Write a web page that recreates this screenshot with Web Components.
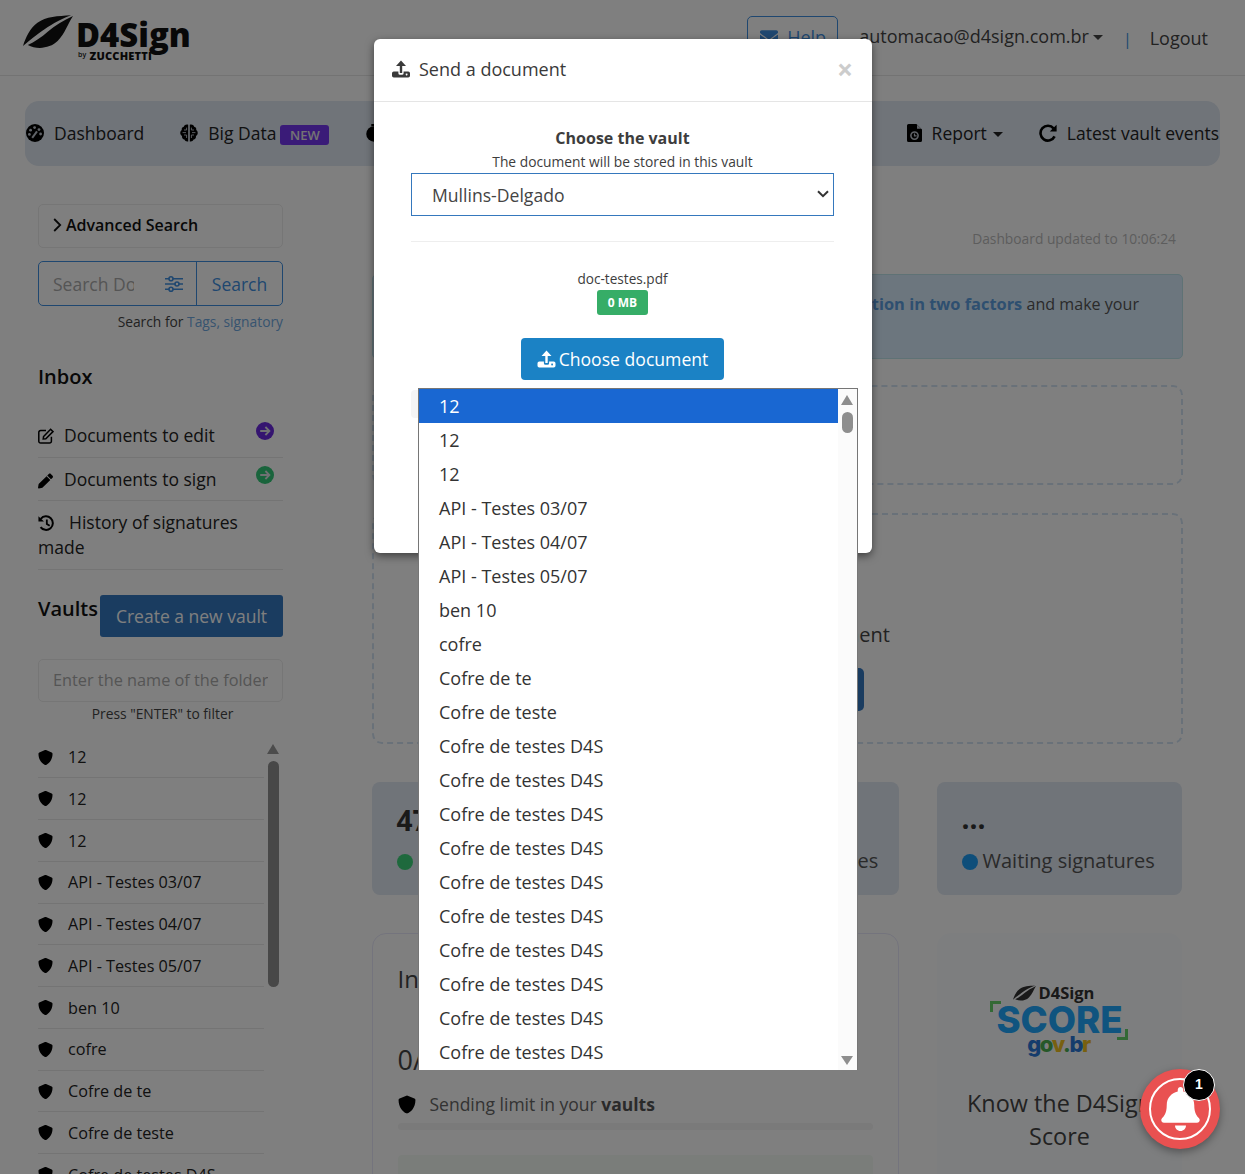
<!DOCTYPE html>
<html lang="en"><head><meta charset="utf-8"><title>D4Sign</title>
<style>
html,body{margin:0;padding:0;height:1174px;overflow:hidden;background:#fff}
body{font-family:"Open Sans","Liberation Sans",sans-serif;color:#333;position:relative}
</style></head><body>
<top-bar></top-bar>
<nav-bar></nav-bar>
<page-body>
  <side-bar slot="side"></side-bar>
  <main-panel slot="main"></main-panel>
</page-body>
<modal-backdrop></modal-backdrop>
<send-modal></send-modal>
<alert-bell></alert-bell>
<script>
const ICONS={
shield:['0 0 512 512','<path fill="currentColor" d="M466.5 83.7l-192-80a48.15 48.15 0 0 0-36.9 0l-192 80C27.7 91.1 16 108.6 16 128c0 198.5 114.5 335.7 221.5 380.3 11.8 4.9 25.1 4.9 36.9 0C360.1 472.6 496 349.3 496 128c0-19.4-11.7-36.9-29.5-44.3z"/>'],
upload:['0 0 18 18','<path fill="currentColor" d="M9 0.5 14 6H10.2V13H7.8V6H4Z"/><path fill="currentColor" fill-rule="evenodd" d="M1.8 11.5H6.4V13.2A1.6 1.6 0 0 0 8 14.8H10A1.6 1.6 0 0 0 11.6 13.2V11.5H16.2A1.8 1.8 0 0 1 18 13.3V15.7A1.8 1.8 0 0 1 16.2 17.5H1.8A1.8 1.8 0 0 1 0 15.7V13.3A1.8 1.8 0 0 1 1.8 11.5ZM14.6 13.6a.9.9 0 1 0 .01 0Z"/>'],
envelope:['0 0 512 512','<path fill="currentColor" d="M502.3 190.8c3.9-3.1 9.7-.2 9.7 4.7V400c0 26.5-21.5 48-48 48H48c-26.5 0-48-21.5-48-48V195.6c0-5 5.7-7.8 9.7-4.7 22.4 17.4 52.1 39.5 154.1 113.6 21.1 15.4 56.7 47.8 92.2 47.6 35.7.3 72-32.8 92.3-47.6 102-74.1 131.6-96.3 154-113.7zM256 320c23.2.4 56.6-29.2 73.4-41.4 132.7-96.3 142.8-104.7 173.4-128.7 5.8-4.5 9.2-11.5 9.2-18.9v-19c0-26.5-21.5-48-48-48H48C21.5 64 0 85.5 0 112v19c0 7.4 3.4 14.3 9.2 18.9 30.6 23.9 40.7 32.4 173.4 128.7 16.8 12.2 50.2 41.8 73.4 41.4z"/>'],
bell:['0 0 448 512','<path fill="currentColor" d="M224 512c35.32 0 63.97-28.65 63.97-64H160.03c0 35.35 28.65 64 63.97 64zm215.39-149.71c-19.32-20.76-55.47-51.99-55.47-154.29 0-77.7-54.48-139.9-127.94-155.16V32c0-17.67-14.32-32-31.98-32s-31.98 14.33-31.98 32v20.84C118.56 68.1 64.08 130.3 64.08 208c0 102.3-36.15 133.53-55.47 154.29-6 6.45-8.66 14.16-8.61 21.71.11 16.4 12.98 32 32.1 32h383.8c19.12 0 32-15.6 32.1-32 .05-7.55-2.61-15.27-8.61-21.71z"/>'],
pencil:['0 0 512 512','<path fill="currentColor" d="M497.9 142.1l-46.1 46.1c-4.7 4.7-12.3 4.7-17 0l-111-111c-4.7-4.7-4.7-12.3 0-17l46.1-46.1c18.7-18.7 49.1-18.7 67.9 0l60.1 60.1c18.8 18.7 18.8 49.1 0 67.9zM284.2 99.8L21.6 362.4.4 483.9c-2.9 16.4 11.4 30.6 27.8 27.8l121.5-21.3 262.6-262.6c4.7-4.7 4.7-12.3 0-17l-111-111c-4.8-4.7-12.4-4.7-17.1 0z"/>'],
edit:['0 0 16 16','<path fill="none" stroke="currentColor" stroke-width="1.5" d="M13.4 8.8V13.2A1.8 1.8 0 0 1 11.6 15H2.6A1.8 1.8 0 0 1 .8 13.2V4.4A1.8 1.8 0 0 1 2.6 2.6H8"/><path fill="none" stroke="currentColor" stroke-width="1.5" d="M5.6 8.4 12.6 1.2 15 3.6 7.8 10.8 5.2 11Z"/>'],
history:['0 0 16 16','<path fill="none" stroke="currentColor" stroke-width="1.9" d="M2.6 3.6A6.4 6.4 0 1 1 2.4 11.4"/><path fill="currentColor" d="M0.4 1.2 5.6 6.2H0.4Z"/><path fill="none" stroke="currentColor" stroke-width="1.7" d="M8.3 4.2V8.4L11 10.2"/>'],
sliders:['0 0 18 16','<g fill="none" stroke="currentColor" stroke-width="1.6"><path d="M0 2.8H18M0 8H18M0 13.2H18"/><circle cx="6" cy="2.8" r="2" fill="#fff"/><circle cx="12" cy="8" r="2" fill="#fff"/><circle cx="6" cy="13.2" r="2" fill="#fff"/></g>'],
gauge:['0 0 18 18','<circle cx="9" cy="9" r="9" fill="currentColor"/><g fill="#c0c6d0"><circle cx="4.6" cy="6.2" r="1.4"/><circle cx="8.6" cy="3.6" r="1.4"/><circle cx="13" cy="5.6" r="1.4"/><circle cx="14.6" cy="10" r="1.4"/><circle cx="3.4" cy="10.4" r="1.4"/></g><path d="M6.2 13.8 11 7.4" stroke="#c0c6d0" stroke-width="2"/>'],
brain:['0 0 18 18','<path fill="currentColor" d="M7 0.4C5 0.4 4 1.6 3.8 2.8 2 3.2 1.4 4.6 1.8 6 0.4 7 0 8.6 0.4 10 0.8 11.2 1.6 11.8 2 12 1.8 14 3 15.4 4.4 15.6 5 17 6.4 17.8 8.2 17.4V0.8C7.8 0.5 7.4 0.4 7 0.4ZM11 0.4C13 0.4 14 1.6 14.2 2.8 16 3.2 16.6 4.6 16.2 6 17.6 7 18 8.6 17.6 10 17.2 11.2 16.4 11.8 16 12 16.2 14 15 15.4 13.6 15.6 13 17 11.6 17.8 9.8 17.4V0.8C10.2 0.5 10.6 0.4 11 0.4Z"/><g fill="none" stroke="#c0c6d0" stroke-width=".9"><path d="M4 6H6.6V3.6M4 11H6.6V14M2.6 8.6H6M14 6H11.4V3.6M14 11H11.4V14M15.4 8.6H12"/></g>'],
timer:['0 0 18 20','<rect x="6" y="0" width="6" height="2.4" fill="currentColor"/><circle cx="9" cy="11" r="8.6" fill="currentColor"/>'],
report:['0 0 15 18','<path fill="currentColor" d="M1.6 0H9.4L15 5.4V16.4A1.6 1.6 0 0 1 13.4 18H1.6A1.6 1.6 0 0 1 0 16.4V1.6A1.6 1.6 0 0 1 1.6 0Z"/><path fill="#c0c6d0" d="M10 0.8V4.8H14.2Z"/><circle cx="7.5" cy="11.6" r="3.6" fill="none" stroke="#c0c6d0" stroke-width="1.6"/><path d="M7.5 9.6V11.8H9.6" fill="none" stroke="#c0c6d0" stroke-width="1.2"/>'],
redo:['0 0 18 18','<path fill="none" stroke="currentColor" stroke-width="2.6" d="M14.6 4.4A7.4 7.4 0 1 0 15.6 12.4"/><path fill="currentColor" d="M17.6 0.8V7.6H10.8Z"/>'],
arrow:['0 0 18 18','<circle cx="9" cy="9" r="9" fill="currentColor"/><path fill="none" stroke="#e0e2e6" stroke-width="1.8" d="M4.2 9H13M9.4 5 13.4 9 9.4 13"/>'],
chevron:['0 0 9 14','<path fill="none" stroke="currentColor" stroke-width="1.8" d="M1.2 1 7.2 7 1.2 13"/>'],
selchev:['0 0 12 8','<path fill="none" stroke="currentColor" stroke-width="2" d="M1 1.2 6 6.2 11 1.2"/>'],
leaf:['0 0 52 34','<path fill="currentColor" d="M50 0C36 1 24 1 15 8 7 14 3 23 0 32 6 27 11 23 19 17 27 11 37 5 50 0Z"/><path fill="currentColor" d="M52 1C42 6 33 11 26 17 19 23 12 28 5 31 14 36 28 35 36 27 44 19 46 10 52 1Z"/>']
};
class Base extends HTMLElement{
  constructor(){super();this.attachShadow({mode:'open'}).innerHTML=`<style>${this.css()}</style>${this.html()}`}
  css(){return ''} html(){return ''}
}
class XIcon extends Base{
  css(){return ':host{display:inline-flex;flex:none;width:var(--w,16px);height:var(--h,16px)}svg{width:100%;height:100%;display:block}'}
  connectedCallback(){const i=ICONS[this.getAttribute('name')];
    this.shadowRoot.innerHTML+=`<svg viewBox="${i[0]}" preserveAspectRatio="xMidYMid meet">${i[1]}</svg>`}
}
customElements.define('x-icon',XIcon);
class TopBar extends Base{
 css(){return `:host{display:flex;align-items:flex-start;height:75px;border-bottom:1px solid #e6e6e6;box-sizing:content-box;padding:0 37px 0 23px;font-size:18px;color:#444}
 .logo{display:flex;gap:3px;position:relative;margin-top:15px;width:170px;height:48px;color:#111}
 .brand{font:800 34px/36px "Open Sans",sans-serif;white-space:nowrap;transform:scaleX(.965);transform-origin:0 0;height:36px;margin-top:1px}
 .by{position:absolute;left:55px;top:33px;font:800 11px/13px "Open Sans",sans-serif;letter-spacing:.2px;white-space:nowrap}
 .by small{font-size:7px;font-weight:600;vertical-align:3px}
 .help{margin-left:auto;margin-top:16px;display:flex;align-items:center;gap:9px;box-sizing:border-box;width:91px;height:41px;padding-left:12px;border:1px solid #3f8fe0;border-radius:5px;color:#3f8fe0;--w:18px;--h:18px}
 .mail{margin:24px 0 0 21px;line-height:24px;white-space:nowrap}
 .caret{display:inline-block;border:5px solid transparent;border-top-color:#444;border-bottom:0;vertical-align:3px;margin-left:4px}
 .sep{margin:27px 0 0 20px;line-height:24px;color:#3f8fe0;font-size:16px}
 .out{margin:26px 0 0 18px;line-height:24px;font-weight:500}`}
 html(){return `<div class="logo"><x-icon name="leaf" style="--w:50px;--h:33px"></x-icon><span class="brand">D4Sign</span><span class="by"><small>by</small> ZUCCHETTI</span></div>
 <div class="help"><x-icon name="envelope"></x-icon><span>Help</span></div>
 <div class="mail">automacao@d4sign.com.br<i class="caret"></i></div><div class="sep">|</div><div class="out">Logout</div>`}
}
class NavBar extends Base{
 css(){return `:host{display:flex;align-items:center;gap:36px;margin:25px 25px 0;height:65px;box-sizing:border-box;padding:0 1px 2px;background:#e0e8f2;border-radius:14px;font-size:17.5px;color:#222;white-space:nowrap}
 .i{display:flex;align-items:center;gap:10px;--w:18px;--h:18px}
 x-icon{color:#000}
 .new{background:#7436f0;color:#e8e8e8;font-size:13px;font-weight:600;border-radius:3px;padding:0 9.5px;line-height:20px;margin-left:-6px;margin-top:5px}
 .right{margin-left:auto;--w:15px}
 .caret{display:inline-block;border:5px solid transparent;border-top-color:#222;border-bottom:0;margin-left:-4px;margin-top:3px}`}
 html(){return `<div class="i"><x-icon name="gauge"></x-icon>Dashboard</div>
 <div class="i"><x-icon name="brain"></x-icon>Big Data<span class="new">NEW</span></div>
 <div class="i"><x-icon name="timer"></x-icon>Deadlines</div>
 <div class="i right"><x-icon name="report"></x-icon>Report<i class="caret"></i></div>
 <div class="i"><x-icon name="redo"></x-icon>Latest vault events</div>`}
}
class PageBody extends Base{
 css(){return ':host{display:grid;grid-template-columns:245px 811.5px;column-gap:88.5px;padding:38px 0 0 38px;height:1008px;overflow:hidden;box-sizing:border-box}'}
 html(){return '<slot name="side"></slot><slot name="main"></slot>'}
}
class VaultRow extends Base{
 css(){return `:host{display:flex;align-items:center;gap:15px;box-sizing:border-box;height:41.75px;border-bottom:1px solid #e8e8e8;font-size:16.2px;color:#222;--w:15px;--h:17px;white-space:nowrap}x-icon{color:#000}`}
 html(){return '<x-icon name="shield"></x-icon><span></span>'}
 connectedCallback(){this.shadowRoot.querySelector('span').textContent=this.getAttribute('label')}
}
customElements.define('vault-row',VaultRow);
const VAULTS=['12','12','12','API - Testes 03/07','API - Testes 04/07','API - Testes 05/07','ben 10','cofre','Cofre de te','Cofre de teste','Cofre de testes D4S','Cofre de testes D4S'];
class SideBar extends Base{
 css(){return `:host{display:block;color:#222;font-size:17.5px}
 .adv{display:flex;align-items:center;gap:4px;box-sizing:border-box;height:44px;padding:0 14px 2px;border:1px solid #ececec;border-radius:5px;font-weight:600;font-size:16px;--w:9px;--h:14px;color:#111}
 .search{display:flex;box-sizing:border-box;height:45px;margin-top:13px;border:1px solid #3f8fe0;border-radius:5px;color:#3f8fe0}
 .s1{width:158px;box-sizing:border-box;display:flex;align-items:center;padding-left:14px;border-right:1px solid #3f8fe0;--w:18px;--h:16px}
 .s1 span{width:81px;overflow:hidden;white-space:nowrap;color:#aaa;margin-right:31px}
 .s2{flex:1;display:flex;align-items:center;justify-content:center}
 .hint{font-size:13.8px;line-height:20px;text-align:right;margin-top:6px;color:#444;white-space:nowrap}
 .hint b{font-weight:400;color:#6fa8e0}
 h2{font-size:20px;font-weight:600;line-height:28px;margin:0;color:#111}
 .inbox{margin-top:31px;margin-bottom:24px}
 .row{position:relative;padding:8.5px 0;line-height:25px;border-bottom:1px solid #e8e8e8;box-sizing:border-box;--w:15px;--h:16px;height:43px}
 .row.first{padding-top:7.5px}
 .row.two{height:69px}
 .row x-icon.ic{vertical-align:-3px;margin-right:11px;color:#000}
 .first x-icon.ic{--w:16px;--h:16px;vertical-align:-2px;margin-right:10px}
 .two x-icon.ic{margin-right:14px;--w:17px;--h:17px}
 .dot{position:absolute;right:9px;top:7px;--w:18px;--h:18px}
 .dot.d2{top:8px}
 .vaults{display:flex;justify-content:space-between;margin-top:25px}
 .new{width:183px;height:42px;line-height:42px;text-align:center;background:#3478c0;color:#fff;border-radius:3px}
 .filter{box-sizing:border-box;height:43px;margin-top:22px;border:1px solid #ececec;border-radius:5px;padding:0 14px;line-height:41px;color:#aaa;overflow:hidden;white-space:nowrap;font-size:16.3px}
 .press{font-size:13.8px;line-height:20px;text-align:center;margin-top:2px;padding-left:4px;color:#444}
 .list{position:relative;margin-top:12.7px;height:500px;width:245px}
 .rows{width:226px}
 .up{position:absolute;left:229px;top:7px;width:0;height:0;border:6.5px solid transparent;border-bottom:10px solid #999;border-top:0}
 .thumb{position:absolute;left:230px;top:24px;width:11px;height:226px;border-radius:5.5px;background:#909090}`}
 html(){return `<div class="adv"><x-icon name="chevron"></x-icon>Advanced Search</div>
 <div class="search"><div class="s1"><span>Search Document</span><x-icon name="sliders"></x-icon></div><div class="s2">Search</div></div>
 <div class="hint">Search for <b>Tags, signatory</b></div>
 <h2 class="inbox">Inbox</h2>
 <div class="row first"><x-icon class="ic" name="edit"></x-icon>Documents to edit<x-icon class="dot" name="arrow" style="color:#6a28e0"></x-icon></div>
 <div class="row"><x-icon class="ic" name="pencil"></x-icon>Documents to sign<x-icon class="dot d2" name="arrow" style="color:#32c878"></x-icon></div>
 <div class="row two"><x-icon class="ic" name="history"></x-icon>History of signatures made</div>
 <div class="vaults"><h2>Vaults</h2><div class="new">Create a new vault</div></div>
 <div class="filter"><div style="width:215px;overflow:hidden">Enter the name of the folder</div></div>
 <div class="press">Press "ENTER" to filter</div>
 <div class="list"><div class="rows">${VAULTS.map(v=>`<vault-row label="${v}"></vault-row>`).join('')}</div><i class="up"></i><i class="thumb"></i></div>`}
}
class MainPanel extends Base{
 css(){return `:host{display:block;padding-top:25px;color:#444;font-size:18px}
 .upd{font-size:13.8px;line-height:20px;text-align:right;padding-right:7px;color:#bbb}
 .alert{box-sizing:border-box;height:85px;margin-top:25px;background:#d8ecfc;border:1px solid #bee5eb;border-radius:5px;padding:17px 43px 0 0;text-align:right;font-size:16.1px;line-height:24px;white-space:nowrap;overflow:hidden;color:#555}
 .alert b{color:#5c9fe0;font-size:16.4px}
 .dash{box-sizing:border-box;border:2px dashed #d2e2f2;border-radius:10px;margin-top:26px;height:100px}
 .d2{margin-top:28px;height:231px;display:flex;flex-direction:column;align-items:center;justify-content:flex-end;padding-bottom:31px}
 .d2 p{margin:0 0 20px;padding-left:10px;font-size:20px;line-height:27px;color:#444}
 .btn{width:173px;height:43px;border-radius:5px;background:#3478c0;color:#fff;text-align:center;line-height:43px}
 .stats{display:grid;grid-template-columns:245px 245px 245px;gap:37.5px;margin-top:38px}
 .st{box-sizing:border-box;height:113px;background:#e0e8f2;border-radius:8px;padding:22px 25px 0;color:#555;white-space:nowrap}
 .st b{display:block;font-size:28px;line-height:32px;color:#333}
 .st b.dots{position:relative;top:-2px}
 .st .l{display:flex;align-items:center;gap:5px;font-size:20px;line-height:27px;margin-top:11px}
 .st i{width:16px;height:16px;border-radius:50%;flex:none;position:relative;top:1px}
 .bot{display:grid;grid-template-columns:527.5px 245px;gap:38px;margin-top:38px}
 .c{box-sizing:border-box;height:320px;border-radius:14px;background:#fbfcfe}
 .c1{border:1px solid #e8e8fa;background:#fff;padding:27px 25px}
 .c1 h3{margin:0;font-size:24px;line-height:36px;font-weight:400;color:#444}
 .c1 .n{font-size:27px;line-height:36px;margin-top:45px;color:#444}
 .lim{display:flex;align-items:center;gap:14px;margin-top:14px;--w:18px;--h:19px;line-height:24px;font-size:17.5px;color:#666}
 .lim x-icon{color:#000}.lim b{color:#555}
 .bar{height:7px;border-radius:4px;background:#f4f4f4;margin-top:7px}
 .gr{height:60px;margin-top:25px;border-radius:4px;background:#f4fbf4}
 .c2{text-align:center;padding-top:51px;color:#555}
 .lg{position:relative;height:80px}
 .lg .d{display:flex;justify-content:center;align-items:center;gap:3px;padding-right:12px;font:700 16.5px/18px "Open Sans",sans-serif;--w:23px;--h:16px;color:#333}
 .lg .sc{font:800 36.6px/32px Inter,"Open Sans",sans-serif;color:#20a8ff;margin-top:2px}
 .lg .gv{font:800 22px/20px Inter,"Open Sans",sans-serif;letter-spacing:-1.4px;margin-top:-2px;padding-right:2px}
 .br{position:absolute;width:8px;height:8px}
 .br.a{left:53px;top:17px;border-left:3px solid #66d36a;border-top:3px solid #66d36a}
 .br.b{right:54px;top:45px;border-right:3px solid #66d36a;border-bottom:3px solid #66d36a}
 .c2 h3{margin:23px 0 0;font-size:23.4px;line-height:33px;font-weight:400;color:#444;white-space:normal}
 .c2 p{margin:18px 0 0;font-size:16px;line-height:22px;white-space:nowrap}`}
 html(){return `<div class="upd">Dashboard updated to 10:06:24</div>
 <div class="alert">Your account can be safer. Enable the <b>authentication in two factors</b> and make your</div>
 <div class="dash"></div>
 <div class="dash d2"><p>Upload your document</p><div class="btn">Choose document</div></div>
 <div class="stats">
  <div class="st"><b>47</b><div class="l"><i style="background:#3cd27a"></i>Finished</div></div>
  <div class="st"><b>12</b><div class="l"><i style="background:#e95151"></i>Pending signatures</div></div>
  <div class="st"><b class="dots">...</b><div class="l"><i style="background:#1c9cf4"></i>Waiting signatures</div></div>
 </div>
 <div class="bot">
  <div class="c c1"><h3>Information</h3><div class="n">0/100</div>
   <div class="lim"><x-icon name="shield"></x-icon><span>Sending limit in your <b>vaults</b></span></div><div class="bar"></div><div class="gr"></div></div>
  <div class="c c2"><div class="lg"><div class="d"><x-icon name="leaf"></x-icon>D4Sign</div><div class="sc">SCORE</div>
   <div class="gv"><span style="color:#2a78d8">g</span><span style="color:#4cb050">o</span><span style="color:#f0c020">v</span><span style="color:#4cb050">.</span><span style="color:#2a78d8">b</span><span style="color:#f0c020">r</span></div>
   <i class="br a"></i><i class="br b"></i></div>
   <h3>Know the D4Sign Score</h3><p>Exclusive integration with</p></div>
 </div>`}
}
class ModalBackdrop extends Base{
 css(){return ':host{position:absolute;inset:0;background:rgba(0,0,0,.5)}'}
}
class VaultListbox extends Base{
 css(){return `:host{position:absolute;left:44px;top:349px;width:440px;height:682px;box-sizing:border-box;border:1px solid #767676;border-bottom:0;background:#fff;overflow:hidden;font-size:18px;color:#333;display:block}
 .it{height:34px;line-height:34px;padding-left:20px;width:419px;box-sizing:border-box;white-space:nowrap}
 .it.sel{background:#1967d2;color:#fff}
 .sb{position:absolute;right:0;top:0;bottom:0;width:19px;background:#fbfbfb}
 .up,.dn{position:absolute;left:3px;width:0;height:0;border:6.5px solid transparent}
 .up{top:6px;border-top:0;border-bottom:10px solid #8e8e8e}
 .dn{bottom:5px;border-bottom:0;border-top:9px solid #8e8e8e}
 .th{position:absolute;left:4px;top:23px;width:11px;height:21px;border-radius:5.5px;background:#8e8e8e}`}
 html(){const o=['12','12','12','API - Testes 03/07','API - Testes 04/07','API - Testes 05/07','ben 10','cofre','Cofre de te','Cofre de teste',...Array(10).fill('Cofre de testes D4S')];
  return o.map((t,i)=>`<div class="it${i?'':' sel'}">${t}</div>`).join('')+'<div class="sb"><i class="up"></i><i class="th"></i><i class="dn"></i></div>'}
}
customElements.define('vault-listbox',VaultListbox);
class SendModal extends Base{
 css(){return `:host{position:absolute;left:374px;top:39px;width:498px;height:514px;background:#fff;border-radius:6px;box-shadow:0 3px 9px rgba(0,0,0,.5);color:#3d3d3d;display:block}
 header{display:flex;align-items:center;gap:9px;box-sizing:border-box;height:63px;padding:0 18px 2px;border-bottom:1px solid #e5e5e5;font-size:18px;--w:18px;--h:18px;font-weight:500;color:#3a3a3a}
 .x{margin-left:auto;font-size:28px;font-weight:700;color:#ccc;line-height:1;margin-right:1px}
 .b{padding:0 38px 0 37px;text-align:center}
 h4{margin:24px 0 0;font-size:16px;line-height:24px;font-weight:700}
 .sub{font-size:13.8px;line-height:20px;margin-top:2px;margin-bottom:1px;white-space:nowrap}
 .sw{position:relative;height:43px}
 .sw x-icon{position:absolute;right:5px;top:17px;--w:12px;--h:8px;color:#333;pointer-events:none}
 select{display:block;width:423px;height:43px;box-sizing:border-box;background:#fff;border:1px solid #3578bd;border-radius:0;padding:0 20px;font:17.6px "Open Sans",sans-serif;color:#444;outline:0;margin:0;appearance:none;-webkit-appearance:none}
 hr{border:0;border-top:1px solid #eee;margin:25px 0 0}
 .fn{font-size:13.6px;line-height:20px;margin-top:27px}
 .mb{display:inline-block;margin-top:1px;width:51px;height:25px;line-height:25px;background:#36ad67;color:#fff;border-radius:3px;font-size:12px;font-weight:700;vertical-align:top}
 .bw{height:25px}
 .btn{display:inline-flex;align-items:center;justify-content:center;gap:3px;width:203px;height:42px;margin-top:24px;background:#1b82c5;color:#fff;border-radius:4px;font-size:17.6px;--w:19px;--h:18px}
 .ghost{position:absolute;left:37px;top:351px;width:20px;height:28px;background:#f5f5f5;border-radius:4px}`}
 html(){return `<header><x-icon name="upload"></x-icon>Send a document<span class="x">×</span></header>
 <div class="b"><h4>Choose the vault</h4><div class="sub">The document will be stored in this vault</div>
 <div class="sw"><select><option>Mullins-Delgado</option></select><x-icon name="selchev"></x-icon></div><hr>
 <div class="fn">doc-testes.pdf</div><div class="bw"><span class="mb">0 MB</span></div>
 <div class="btn"><x-icon name="upload"></x-icon>Choose document</div></div>
 <i class="ghost"></i><vault-listbox></vault-listbox>`}
}
class AlertBell extends Base{
 css(){return `:host{position:absolute;left:1140px;top:1069px;width:80px;height:80px;border-radius:50%;background:#e95151;box-shadow:0 3px 8px rgba(0,0,0,.35);display:block}
 .ring{position:absolute;inset:9px;border:2.5px solid #fff;border-radius:50%;box-sizing:border-box;--w:39px;--h:44px;color:#fff;display:flex;align-items:center;justify-content:center}
 .badge{position:absolute;left:43px;top:0;width:32px;height:32px;box-sizing:border-box;border:1.5px solid #fff;border-radius:50%;background:#000;color:#fff;font:700 14px/29px "Liberation Sans",Arial,sans-serif;text-align:center}`}
 html(){return '<div class="ring"><x-icon name="bell"></x-icon></div><div class="badge">1</div>'}
}
customElements.define('top-bar',TopBar);
customElements.define('nav-bar',NavBar);
customElements.define('page-body',PageBody);
customElements.define('side-bar',SideBar);
customElements.define('main-panel',MainPanel);
customElements.define('modal-backdrop',ModalBackdrop);
customElements.define('send-modal',SendModal);
customElements.define('alert-bell',AlertBell);
</script>
</body></html>
